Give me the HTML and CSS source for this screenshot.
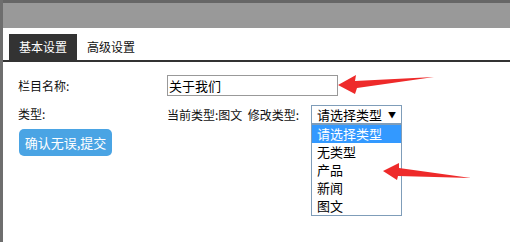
FILE: index.html
```html
<!DOCTYPE html>
<html lang="zh-CN">
<head>
    <meta charset="UTF-8">
    <title>栏目设置</title>
    <link rel="stylesheet" href="styles.css">
</head>
<body>
    <div class="page">
        <div class="top-bar"></div>

        <div class="tabs">
            <div class="tab active">基本设置</div>
            <div class="tab">高级设置</div>
        </div>

        <div class="form">
            <div class="row">
                <div class="label">栏目名称:</div>
                <input class="text-input" type="text" value="关于我们">
            </div>

            <div class="row row-type">
                <div class="label">类型:</div>
                <div class="type-info">当前类型:图文&nbsp;&nbsp;修改类型:</div>
                <div class="select">
                    <div class="select-box">请选择类型<span class="caret">&#9660;</span></div>
                    <div class="select-list">
                        <div class="option selected">请选择类型</div>
                        <div class="option">无类型</div>
                        <div class="option">产品</div>
                        <div class="option">新闻</div>
                        <div class="option">图文</div>
                    </div>
                </div>
            </div>

            <button class="submit-btn">确认无误,提交</button>
        </div>

        <svg class="arrows" width="510" height="242" viewBox="0 0 510 242">
            <polygon points="338,85 356,75 355,81 434,77 357,88 355,94" fill="#ee2a2a"/>
            <polygon points="383,171 399,163 399,168 471,178 398,176 397,180" fill="#ee2a2a"/>
        </svg>
    </div>
</body>
</html>
```

FILE: styles.css
```css
body {
    margin: 0;
    font-family: "Noto Sans CJK SC", "Microsoft YaHei", sans-serif;
    font-size: 12px;
    color: #111;
    background-color: #fff;
}

.page {
    position: relative;
    height: 242px;
    border-left: 3px solid #6e6e6e;
    overflow: hidden;
}

.top-bar {
    height: 25px;
    background-color: #999;
    border-top: 3px solid #666;
}

.tabs {
    display: flex;
    margin-top: 6px;
    padding-left: 6px;
    border-bottom: 2px solid #333;
}

.tab {
    height: 26px;
    line-height: 26px;
    padding: 0 10px;
    font-size: 12px;
    color: #111;
}

.tab.active {
    width: 48px;
    background-color: #333;
    color: #fff;
}

.form {
    padding: 13px 0 0 15px;
}

.row {
    display: flex;
    align-items: center;
}

.label {
    width: 149px;
    font-size: 12px;
    line-height: 16px;
}

.text-input {
    box-sizing: border-box;
    width: 171px;
    height: 21px;
    margin: 0;
    padding: 0 1px;
    border: 1px solid #999;
    font-family: inherit;
    font-size: 13px;
    color: #000;
    outline: none;
}

.row-type {
    align-items: flex-end;
    margin-top: 9px;
}

.row-type .label {
    align-self: flex-start;
    margin-top: 1px;
}

.type-info {
    font-size: 12px;
    line-height: 16px;
    padding-bottom: 1px;
    width: 144px;
}

.select {
    position: relative;
    width: 91px;
}

.select-box {
    box-sizing: border-box;
    height: 19px;
    line-height: 17px;
    padding-left: 5px;
    border: 1px solid #7f9db9;
    font-size: 13px;
    color: #000;
}

.caret {
    font-size: 8px;
    margin-left: 6px;
    vertical-align: 2px;
}

.select-list {
    position: absolute;
    top: 19px;
    left: 0;
    width: 91px;
    box-sizing: border-box;
    border: 1px solid #7f9db9;
    background-color: #fff;
    z-index: 2;
}

.option {
    height: 18px;
    line-height: 18px;
    padding-left: 5px;
    font-size: 13px;
    color: #000;
}

.option.selected {
    background-color: #3399ff;
    color: #fff;
}

.submit-btn {
    display: block;
    width: 93px;
    height: 27px;
    margin: 5px 0 0 1px;
    padding: 0;
    border: none;
    border-radius: 5px;
    background-color: #4aa4e4;
    color: #fff;
    font-family: inherit;
    font-size: 13px;
}

.arrows {
    position: absolute;
    top: 0;
    left: -3px;
    z-index: 3;
}
```
